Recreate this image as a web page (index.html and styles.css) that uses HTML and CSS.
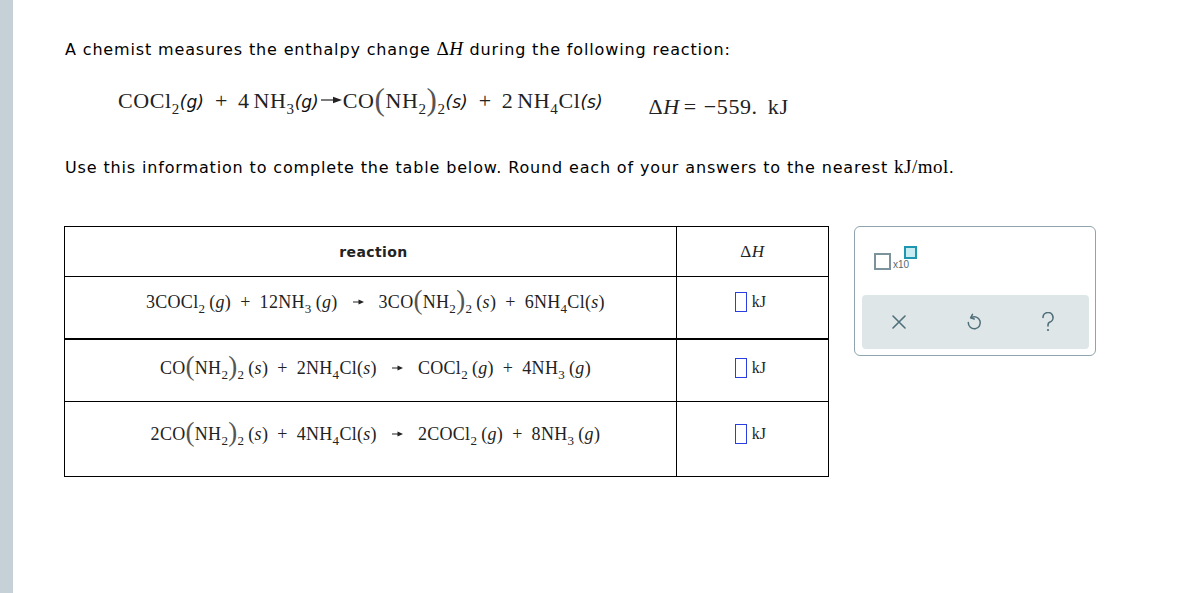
FILE: index.html
```html
<!DOCTYPE html>
<html>
<head>
<meta charset="utf-8">
<link rel="stylesheet" href="styles.css">
</head>
<body>
<div class="page">
  <div class="sidebar"></div>
  <div class="content">
    <p class="intro">A chemist measures the enthalpy change <span class="m">Δ<i>H</i></span> during the following reaction:</p>
    <div class="given">
      <span class="eq">COCl<sub>2</sub><span class="ph">(g)</span><span class="pl">+</span>4<span class="th"></span>NH<sub>3</sub><span class="ph">(g)</span><svg class="arr" width="21" height="8" viewBox="0 0 21 8"><path d="M0 4 H14" stroke="#222" stroke-width="1.2"/><path d="M12 0.8 L21 4 L12 7.2 Z" fill="#222"/></svg>CO<span class="bp">(</span>NH<sub>2</sub><span class="bp">)</span><sub>2</sub><span class="ph">(s)</span><span class="pl">+</span>2<span class="th"></span>NH<sub>4</sub>Cl<span class="ph">(s)</span></span>
      <span class="dh">Δ<i>H</i><span class="eqs">=</span>−559.<span class="th"></span> kJ</span>
    </div>
    <p class="instr">Use this information to complete the table below. Round each of your answers to the nearest <span class="m">kJ/mol</span>.</p>
    <div class="work">
      <table class="tbl">
        <tr class="head">
          <th class="c1">reaction</th>
          <th class="c2"><span class="m">Δ<i>H</i></span></th>
        </tr>
        <tr class="r1">
          <td class="c1"><div class="cell"><span class="teq">3COCl<sub>2</sub><span class="st">(<i>g</i>)</span><span class="op">+</span>12NH<sub>3</sub><span class="st">(<i>g</i>)</span><svg class="ta" width="11" height="6" viewBox="0 0 11 6"><path d="M0 3 H7" stroke="#222" stroke-width="1"/><path d="M5.5 0.5 L11 3 L5.5 5.5 Z" fill="#222"/></svg>3CO<span class="bp">(</span>NH<sub>2</sub><span class="bp">)</span><sub>2</sub><span class="st">(<i>s</i>)</span><span class="op">+</span>6NH<sub>4</sub>Cl(<i>s</i>)</span></div></td>
          <td class="c2"><div class="cell"><span class="box"></span><span class="kj">kJ</span></div></td>
        </tr>
        <tr class="r2">
          <td class="c1"><div class="cell"><span class="teq">CO<span class="bp">(</span>NH<sub>2</sub><span class="bp">)</span><sub>2</sub><span class="st">(<i>s</i>)</span><span class="op">+</span>2NH<sub>4</sub>Cl(<i>s</i>)<svg class="ta" width="11" height="6" viewBox="0 0 11 6"><path d="M0 3 H7" stroke="#222" stroke-width="1"/><path d="M5.5 0.5 L11 3 L5.5 5.5 Z" fill="#222"/></svg>COCl<sub>2</sub><span class="st">(<i>g</i>)</span><span class="op">+</span>4NH<sub>3</sub><span class="st">(<i>g</i>)</span></span></div></td>
          <td class="c2"><div class="cell"><span class="box"></span><span class="kj">kJ</span></div></td>
        </tr>
        <tr class="r3">
          <td class="c1"><div class="cell"><span class="teq">2CO<span class="bp">(</span>NH<sub>2</sub><span class="bp">)</span><sub>2</sub><span class="st">(<i>s</i>)</span><span class="op">+</span>4NH<sub>4</sub>Cl(<i>s</i>)<svg class="ta" width="11" height="6" viewBox="0 0 11 6"><path d="M0 3 H7" stroke="#222" stroke-width="1"/><path d="M5.5 0.5 L11 3 L5.5 5.5 Z" fill="#222"/></svg>2COCl<sub>2</sub><span class="st">(<i>g</i>)</span><span class="op">+</span>8NH<sub>3</sub><span class="st">(<i>g</i>)</span></span></div></td>
          <td class="c2"><div class="cell"><span class="box"></span><span class="kj">kJ</span></div></td>
        </tr>
      </table>
      <div class="panel">
        <div class="panel-top">
          <span class="sci"><span class="sq"></span><span class="x10">x10</span><span class="sup"></span></span>
        </div>
        <div class="toolbar">
          <svg class="ic" width="16" height="16" viewBox="0 0 16 16"><path d="M2 2 L14 14 M14 2 L2 14" stroke="#4f6f7a" stroke-width="1.6" fill="none" stroke-linecap="round"/></svg>
          <svg class="ic" width="16" height="18" viewBox="0 0 16 18"><path d="M5.2 4.6 A6 6 0 1 1 2.3 9.5" stroke="#4f6f7a" stroke-width="1.5" fill="none" stroke-linecap="round"/><path d="M6.5 1.4 L4.6 4.8 L8.2 6" stroke="#4f6f7a" stroke-width="1.5" fill="none" stroke-linecap="round" stroke-linejoin="round"/></svg>
          <svg class="ic" width="14" height="20" viewBox="0 0 14 20"><path d="M2 5.5 A5 5 0 1 1 8.5 10.3 C7.3 10.9 7 11.6 7 13 L7 14" stroke="#4f6f7a" stroke-width="1.6" fill="none" stroke-linecap="round"/><circle cx="7" cy="18" r="1.1" fill="#4f6f7a"/></svg>
        </div>
      </div>
    </div>
  </div>
</div>
</body>
</html>
```
FILE: styles.css
```css
html, body {
  margin: 0;
  padding: 0;
  background: #fff;
}
.page {
  display: flex;
  min-height: 593px;
}
.sidebar {
  width: 13px;
  background: #c5d1d7;
  flex: none;
}
.content {
  padding: 38px 0 0 52px;
  font-family: "DejaVu Sans", Verdana, sans-serif;
  font-size: 16px;
  letter-spacing: 0.85px;
  color: #000;
}
.intro {
  margin: 0;
  line-height: 22px;
}
.m {
  font-family: "Liberation Serif", "Times New Roman", serif;
  font-size: 19px;
  letter-spacing: 0.5px;
}
.given {
  display: flex;
  align-items: baseline;
  height: 30px;
  line-height: 30px;
  margin: 25px 0 0 53px;
  font-family: "Liberation Serif", "Times New Roman", serif;
  font-size: 22px;
  letter-spacing: 0.6px;
  color: #222;
}
.given sub {
  font-size: 15px;
  vertical-align: -6px;
  line-height: 0;
}
.ph {
  font-family: "DejaVu Sans", Verdana, sans-serif;
  font-style: italic;
  font-size: 17px;
  letter-spacing: 0;
  color: #111;
}
.pl { margin: 0 10px 0 11px; }
.th { display: inline-block; width: 4px; }
.arr {
  margin: 0 1px 0 2px;
  vertical-align: 4px;
}
.bp {
  font-size: 31px;
  line-height: 0;
  color: #555;
  vertical-align: -2px;
}
.dh {
  margin-left: 46px;
  position: relative;
  top: 6px;
}
.eqs { margin: 0 7px 0 4px; }
.instr {
  margin: 40px 0 0 0;
  line-height: 22px;
}
.work {
  display: flex;
  align-items: flex-start;
  margin-top: 47px;
  margin-left: -1px;
  letter-spacing: 0;
}
.tbl {
  border-collapse: collapse;
  table-layout: fixed;
  width: 765px;
  border: 1px solid #000;
}
.tbl th, .tbl td {
  border: 1px solid #000;
  padding: 0;
  text-align: center;
  vertical-align: top;
}
.tbl .c1 { width: 612px; }
.tbl .c2 { width: 151px; }
.head th {
  height: 49px;
  vertical-align: middle;
  font-weight: bold;
  font-size: 14px;
  letter-spacing: 0.4px;
  color: #222;
  padding-left: 6px;
}
.head th.c1 { width: 604px; }
.head th.c2 { font-weight: normal; padding-left: 0; }
.head .m { font-size: 17px; }
.r1 td { height: 46px; padding-top: 15px; border-bottom: 2px solid #000; }
.r2 td { height: 43px; padding-top: 18px; }
.r3 td { height: 52px; padding-top: 22px; }
.cell {
  display: flex;
  justify-content: center;
  align-items: center;
  height: 20px;
  line-height: 20px;
}
.teq {
  font-family: "Liberation Serif", "Times New Roman", serif;
  font-size: 18px;
  color: #222;
  letter-spacing: 0.3px;
  padding-left: 10px;
  white-space: nowrap;
  line-height: 20px;
}
.teq sub {
  font-size: 13px;
  vertical-align: -5px;
  line-height: 0;
}
.st { margin-left: 4px; }
.op { margin: 0 9px; }
.teq .bp { font-size: 27px; vertical-align: -1px; }
.ta { margin: 0 15px; vertical-align: 3px; }
.c2 .cell { gap: 5px; padding-right: 4px; }
.box {
  width: 10px;
  height: 18px;
  border: 1px solid #2b3fe0;
}
.kj {
  font-family: "Liberation Serif", "Times New Roman", serif;
  font-size: 16px;
  color: #222;
}
.panel {
  margin-left: 25px;
  width: 242px;
  height: 130px;
  border: 1px solid #8fa5ad;
  border-radius: 6px;
  box-sizing: border-box;
  padding: 0 6px 6px 7px;
  display: flex;
  flex-direction: column;
}
.panel-top {
  height: 68px;
  position: relative;
}
.sci {
  position: absolute;
  left: 12px;
  top: 19px;
  width: 50px;
  height: 24px;
}
.sq {
  position: absolute;
  left: 0;
  top: 7px;
  width: 17px;
  height: 17px;
  border: 2px solid #7d939b;
  box-sizing: border-box;
}
.x10 {
  position: absolute;
  left: 19px;
  top: 13px;
  font-family: "Liberation Sans", Arial, sans-serif;
  font-size: 10px;
  color: #546a72;
}
.sup {
  position: absolute;
  left: 30px;
  top: 0;
  width: 13px;
  height: 13px;
  background: #c7ecf2;
  border: 2px solid #1d97b0;
  box-sizing: border-box;
}
.toolbar {
  height: 54px;
  background: #dfe6e8;
  border-radius: 4px;
  display: flex;
  align-items: center;
  justify-content: space-between;
  padding: 0 34px 0 29px;
}
```
